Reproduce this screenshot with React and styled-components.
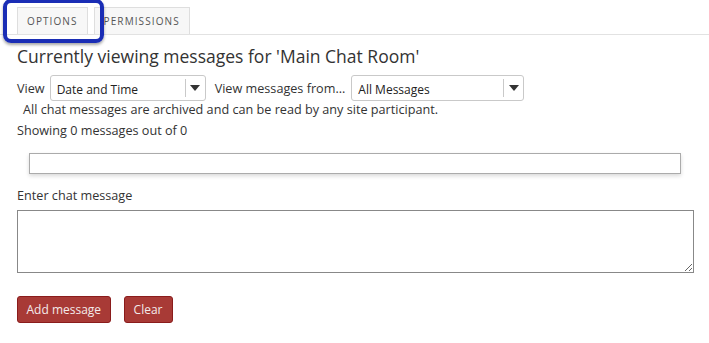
import React from 'react'
import styled, { createGlobalStyle } from 'styled-components'

const Global = createGlobalStyle`
  body {
    margin: 0;
    background: #fff;
    font-family: 'Open Sans', 'Noto Sans', sans-serif;
    color: #333;
  }
`

const Page = styled.div`
  width: 709px;
  height: 343px;
  overflow: hidden;
  position: relative;
`

const TabBar = styled.div`
  display: flex;
  gap: 6px;
  padding: 7px 0 0 17px;
  border-bottom: 1px solid #e2e2e2;
  height: 27px;
`

const Tab = styled.div`
  border: 1px solid #dedede;
  border-bottom: none;
  background: #f7f7f7;
  padding: 0 ${p => p.$pad}px;
  font-size: 10px;
  letter-spacing: 1.1px;
  color: #555;
  display: flex;
  align-items: center;
  height: 26px;
`

// callout drawn over the first tab
const Highlight = styled.div`
  position: absolute;
  left: 3px;
  top: -1px;
  width: 93px;
  height: 36px;
  border: 4px solid #1a2db5;
  border-radius: 8px;
  box-shadow: 0 2px 3px rgba(0, 0, 0, 0.35);
`

const Body = styled.div`
  padding: 0 16px 0 17px;
`

const Heading = styled.h2`
  margin: 9px 0 0;
  font-size: 17.5px;
  font-weight: 400;
  color: #333;
  line-height: 24px;
`

const FilterRow = styled.div`
  display: flex;
  align-items: center;
  margin-top: 7px;
  font-size: 12.65px;
`

const Label = styled.span`
  margin-right: ${p => p.$gap}px;
`

const Select = styled.div`
  display: flex;
  width: ${p => p.$w}px;
  height: 26px;
  border: 1px solid #c9c9c9;
  border-radius: 3px;
  background: #fff;
  box-sizing: border-box;
  margin-right: 9px;
`

const SelectText = styled.div`
  flex: 1;
  font-size: 12px;
  color: #222;
  padding: 6px 0 0 6px;
  line-height: 16px;
`

const Arrow = styled.div`
  width: 19px;
  display: flex;
  align-items: center;
  justify-content: center;
  border-left: 1px solid #c9c9c9;
  margin: 3px 0;
`

const Note = styled.div`
  font-size: 12.65px;
  margin: 0 0 0 6px;
  line-height: 16px;
`

const Count = styled.div`
  font-size: 12.65px;
  margin-top: 4px;
  line-height: 18px;
`

const Transcript = styled.div`
  margin: 14px 12px 0 12px;
  height: 19px;
  border: 1px solid #ababab;
  box-shadow: 0 2px 4px rgba(0, 0, 0, 0.15);
`

const FieldLabel = styled.div`
  font-size: 12.65px;
  margin-top: 12px;
  line-height: 18px;
`

const TextArea = styled.textarea`
  display: block;
  box-sizing: border-box;
  width: 677px;
  height: 63px;
  margin-top: 6px;
  border: 1px solid #888;
  font-family: inherit;
`

const Buttons = styled.div`
  display: flex;
  gap: 13px;
  margin-top: 23px;
`

const Button = styled.button`
  background: #a83a36;
  border: 1px solid #8a1c1c;
  border-radius: 3px;
  color: #f3eaea;
  font-family: 'Open Sans', sans-serif;
  font-size: 12px;
  height: 27px;
  padding: 0 ${p => p.$pad}px;
`

const Caret = () => (
  <svg width="10" height="6" viewBox="0 0 10 6">
    <path d="M0 0 L10 0 L5 6 Z" fill="#333" />
  </svg>
)

export default function App() {
  return (
    <Page>
      <Global />
      <TabBar>
        <Tab $pad={9}>OPTIONS</Tab>
        <Tab $pad={9}>PERMISSIONS</Tab>
      </TabBar>
      <Highlight />
      <Body>
        <Heading>Currently viewing messages for 'Main Chat Room'</Heading>
        <FilterRow>
          <Label $gap={5}>View</Label>
          <Select $w={156}>
            <SelectText>Date and Time</SelectText>
            <Arrow><Caret /></Arrow>
          </Select>
          <Label $gap={6}>View messages from...</Label>
          <Select $w={173}>
            <SelectText>All Messages</SelectText>
            <Arrow><Caret /></Arrow>
          </Select>
        </FilterRow>
        <Note>All chat messages are archived and can be read by any site participant.</Note>
        <Count>Showing 0 messages out of 0</Count>
        <Transcript />
        <FieldLabel>Enter chat message</FieldLabel>
        <TextArea />
        <Buttons>
          <Button $pad={8.5}>Add message</Button>
          <Button $pad={9}>Clear</Button>
        </Buttons>
      </Body>
    </Page>
  )
}
